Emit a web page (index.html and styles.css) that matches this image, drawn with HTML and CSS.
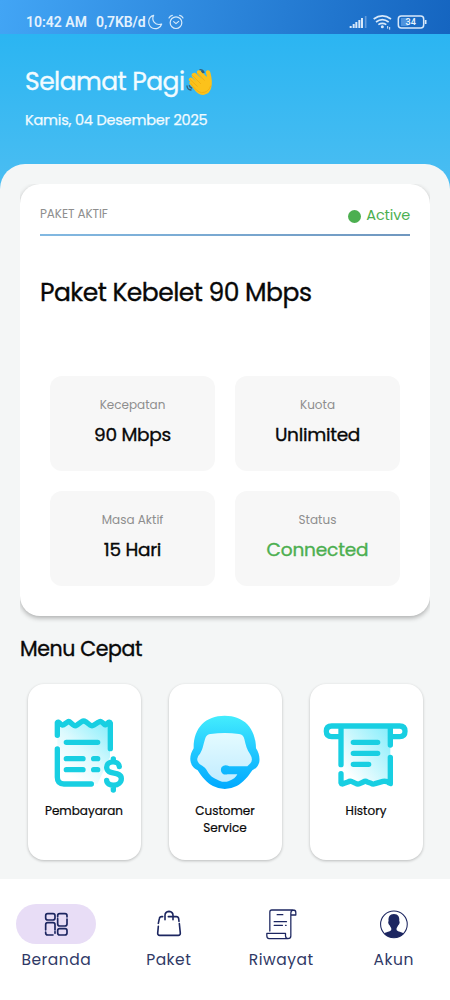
FILE: index.html
```html
<!DOCTYPE html>
<html lang="id">
<head>
<meta charset="utf-8">
<title>Beranda</title>
<link rel="stylesheet" href="styles.css">
</head>
<body>
<div class="app">
  <div class="statusbar">
    <span class="sb-time">10:42 AM</span>
    <span class="sb-rate">0,7KB/d</span>
    <svg class="sb-left" viewBox="438 36 120 60" fill="none" stroke="#d6eafb" stroke-width="3.6" stroke-linecap="round" stroke-linejoin="round">
      <path d="M461 46C443 50 441 76 457 84C468 89 482 84 485 72C466 78 453 62 461 46Z"/>
      <circle cx="528" cy="68" r="17.500"/><path d="M521 65L528 71L536 64M507 54Q510 47 517 46M539 46Q546 47 549 54"/>
    </svg>
    <svg class="sb-right" viewBox="369 36 240 60" fill="none" stroke="#d9e9fa">
      <path d="M377 78v6M386 72v12M394 66v18M403 60v24M411 54v30" stroke-width="6"/>
      <path d="M422 48v36" stroke-width="5" stroke="#639bdb"/>
      <path d="M446 57Q472 38 498 57M453 66Q472 52 491 66M460 74Q472 66 484 74" stroke-width="5"/>
      <circle cx="472" cy="80" r="4.500" fill="#d9e9fa" stroke="none"/><path d="M488 78v8M494 81v8" stroke-width="3"/>
      <rect x="520" y="48" width="76" height="36" rx="9" stroke-width="4.500"/>
      <rect x="528" y="54" width="22" height="24" fill="#4f93dd" stroke="none"/>
      <path d="M602 60v12" stroke-width="5"/>
      <text class="sb-batt" x="557" y="75.500" text-anchor="middle">34</text>
    </svg>
  </div>
  <header class="header">
    <h1 class="greeting"><span class="greeting-text">Selamat Pagi</span>
      <svg class="wave" viewBox="558 200 84 90">
        <path d="M567 235Q572 229 578 234L589 244L576 229Q572 221 580 218Q585 216 590 221L606 237L592 220Q588 212 595 210Q600 208 605 213L620 230Q621 225 618 219Q616 211 623 210Q630 209 632 220Q638 243 634 261Q630 281 610 284Q596 284 587 273L569 251Q566 244 574 243L580 246L569 243Q564 239 567 235Z" fill="#fcc21b"/>
        <path d="M571 238L592 258M577 225L602 250M594 219L613 240M573 250Q591 276 605 277Q625 277 632 257" fill="none" stroke="#f2ac10" stroke-width="2.500" stroke-linecap="round"/>
        <path d="M600 208Q609 208 612 216M605 213l4 4M561 257Q562 268 573 269M568 256Q569 261 575 263" fill="none" stroke="#355f79" stroke-width="4" stroke-linecap="round"/>
      </svg>
    </h1>
    <p class="date">Kamis, 04 Desember 2025</p>
  </header>
  <main class="sheet">
    <section class="plan">
      <div class="plan-head"><span class="plan-label">PAKET AKTIF</span><span class="active"><i class="dot"></i><span class="active-text">Active</span></span></div>
      <h2 class="plan-name">Paket Kebelet 90 Mbps</h2>
      <div class="stats">
        <div class="stat"><span class="stat-label">Kecepatan</span><strong class="stat-value">90 Mbps</strong></div>
        <div class="stat"><span class="stat-label">Kuota</span><strong class="stat-value">Unlimited</strong></div>
        <div class="stat"><span class="stat-label">Masa Aktif</span><strong class="stat-value">15 Hari</strong></div>
        <div class="stat"><span class="stat-label">Status</span><strong class="stat-value connected">Connected</strong></div>
      </div>
    </section>
    <h3 class="menu-title">Menu Cepat</h3>
    <div class="menu">
      <a class="tile">
        <svg class="tile-icon" viewBox="57 129 270 246" fill="none" stroke="#18cfe2" stroke-width="16" stroke-linecap="round" stroke-linejoin="round">
          <defs><linearGradient id="paper" x1="1" y1="0" x2="0.100" y2="0.800"><stop stop-color="#83edfb"/><stop offset="1" stop-color="#fff"/></linearGradient>
          <linearGradient id="bill" x1="1" y1="0" x2="0.300" y2="0.900"><stop stop-color="#83edfb"/><stop offset=".6" stop-color="#dcfafe"/><stop offset="1" stop-color="#fff"/></linearGradient></defs>
          <path d="M112 157L125 168L138 157L164 168L190 153L218 168L245 153L270 157V262L232 342H130L112 322Z" fill="url(#bill)" stroke="none"/>
          <path d="M112 196V158Q114 154 120 160Q127 169 134 162L143 156Q147 153 152 158L160 165Q165 169 171 165L185 155Q191 151 197 155L210 165Q216 169 222 165L235 157Q241 152 246 157L253 163Q257 167 262 160Q269 153 271 159V236"/>
          <path d="M112 237V322Q112 342 132 342H214M139 217H233M139 266H189M221 266H233M139 299H189M221 299H233"/>
          <path d="M298 290C296 270 260 271 260 292C260 318 304 301 304 326C304 350 260 352 260 331M280 267V275M280 350V360"/>
        </svg>
        <span class="tile-label">Pembayaran</span>
      </a>
      <a class="tile">
        <svg class="tile-icon" viewBox="59 129 270 246">
          <defs><linearGradient id="agent" x1="0" y1="0" x2="0" y2="1"><stop stop-color="#44edfd"/><stop offset=".45" stop-color="#24caff"/><stop offset="1" stop-color="#00a9ff"/></linearGradient>
          <linearGradient id="face" x1="0" y1="0" x2="0" y2="1"><stop stop-color="#e4fbff"/><stop offset="1" stop-color="#c2ecff"/></linearGradient></defs>
          <path d="M193 137C135 137 99 174 100 235C91 249 88 264 91 275Q94 292 112 301C125 321 140 340 158 348Q193 366 229 348C248 339 263 320 276 301Q294 292 297 275C299 260 295 247 287 235C286 173 250 137 193 137Z" fill="url(#agent)"/>
          <path d="M151 192Q193 186 236 192C245 193 250 198 252 207C256 225 260 240 269 252Q281 271 268 282L261 289H207Q193 281 184 291Q178 303 187 311Q192 315 202 313H231Q226 326 204 334Q191 338 177 332C156 323 148 317 141 304C132 286 119 287 113 276Q106 263 119 251C128 238 130 218 136 202Q140 193 151 192Z" fill="url(#face)"/>
        </svg>
        <span class="tile-label">Customer<br>Service</span>
      </a>
      <a class="tile">
        <svg class="tile-icon" viewBox="63 129 270 246" fill="none" stroke="#18cfe2" stroke-width="16" stroke-linecap="round" stroke-linejoin="round">
          <path d="M124 172H271V338L242 333L220 342L197 333L170 342L149 333L124 340Z" fill="url(#paper)" stroke="none"/>
          <path d="M118 200H95Q79 200 79 184Q79 168 95 168H299Q315 168 315 184Q315 200 299 200H277M123 172V284M271 172V225M271 262V341Q267 341 262 335Q255 333 249 334L225 341Q219 344 213 340L202 336Q196 332 190 336L179 341Q173 344 167 340L156 335Q150 332 144 336L133 340Q125 345 123 338V311M160 217H233M160 250H233M160 283H206"/>
        </svg>
        <span class="tile-label">History</span>
      </a>
    </div>
  </main>
  <nav class="nav">
    <a class="nav-item"><span class="pill on">
      <svg class="nav-icon" viewBox="120 102 96 120" stroke-width="5">
        <rect x="137" y="131" width="28" height="19" rx="6"/><rect x="173" y="176" width="28" height="19" rx="6"/>
        <path d="M137 180V164Q137 158 143 158H159Q165 158 165 164V180M137 186V189Q137 195 143 195H159M165 185V190M201 147V162Q201 168 195 168H179Q173 168 173 162V146M173 140V137Q173 131 179 131H195Q201 131 201 137V141"/>
      </svg></span><span class="nav-label">Beranda</span></a>
    <a class="nav-item"><span class="pill">
      <svg class="nav-icon" viewBox="459 102 96 120" stroke-width="4.800">
        <path d="M475 160L478 146Q479 140 485 140H488M495 149V136Q495 125 507 124Q519 125 519 136V149M505 140H529Q535 140 536 146L537 154M538 161L541 190Q541 196 535 196H479Q473 196 473 190L475 169"/>
      </svg></span><span class="nav-label">Paket</span></a>
    <a class="nav-item"><span class="pill">
      <svg class="nav-icon" viewBox="119.500 102 96 120" stroke-width="3.800">
        <path d="M134 183V126Q134 120 140 120H204Q212 120 212 128V135H198M204 120Q197 121 197 130V198Q197 206 188 206H132Q125 205 125 197V190H181V198Q182 206 189 206M156 134H173M147 155H184M147 166H172M181 166H183"/>
      </svg></span><span class="nav-label">Riwayat</span></a>
    <a class="nav-item"><span class="pill">
      <svg class="nav-icon" viewBox="458.250 102 96 120" stroke-width="3.200">
        <circle cx="506" cy="163" r="40"/>
        <path d="M506 132C493 132 489 141 490 153C487 156 490 164 493 166L498 175V180C496 185 481 186 477 191Q488 203 506 203Q524 203 535 191C531 186 516 185 514 180V175L519 166C522 164 525 156 522 153C523 141 519 132 506 132Z" fill="#1c2660" stroke="none"/>
      </svg></span><span class="nav-label">Akun</span></a>
  </nav>
</div>
</body>
</html>
```
FILE: styles.css
```css
* { box-sizing: border-box; }
body { margin: 0; font-family: Poppins, Inter, "Liberation Sans", sans-serif; color: #080808; background: #fff; }
h1, h2, h3, p { margin: 0; font-weight: 400; }
.app { width: 450px; height: 1000px; display: flex; flex-direction: column; background: linear-gradient(#2bb5f2 34px, #49bdf2 180px); }
.statusbar { height: 34px; flex: none; display: flex; align-items: center; padding: 10px 22px 0 26px; background: linear-gradient(100deg, #42a5f5, #1565c0); color: #e4f2fe; font: 600 14px/24px Roboto, sans-serif; white-space: nowrap; }
.sb-time { width: 70px; }
.sb-rate { width: 50px; letter-spacing: -.1px; }
.sb-left { width: 40px; height: 20px; }
.sb-right { width: 80px; height: 20px; margin-left: auto; margin-right: 0; }
.sb-batt { font: 600 27px Roboto, sans-serif; fill: #e8f3fe; stroke: none; }
.header { height: 130px; flex: none; padding: 31px 25px 0; color: #f2fbff; }
.greeting { display: flex; align-items: center; height: 34px; font-size: 25px; line-height: 34px; -webkit-text-stroke: .35px; }
.greeting-text { width: 161px; white-space: nowrap; letter-spacing: -.55px; }
.wave { width: 28px; height: 30px; }
.date { margin-top: 11px; font-size: 14.5px; line-height: 20px; letter-spacing: -.2px; -webkit-text-stroke: .25px; }
.sheet { height: 715px; flex: none; padding: 20px 20px 0; background: #f4f6f6; border-radius: 25px 25px 0 0; }
.plan { height: 432px; padding: 20px; border-radius: 20px; background: #fff; box-shadow: 0 2px 5px rgba(0,0,0,.3); clip-path: inset(0 0 -10px 0); }
.plan-head { height: 32px; display: flex; justify-content: space-between; border-bottom: 2px solid; border-image: linear-gradient(90deg, #82b9e2, #7097bf) 1; }
.plan-label { font-size: 12px; line-height: 19px; letter-spacing: -.1px; color: #8e8e8e; }
.active { display: flex; align-items: center; height: 22px; gap: 5px; color: #4caf50; font-size: 14.5px; letter-spacing: -.15px; }
.dot { width: 13px; height: 13px; border-radius: 50%; background: #4caf50; margin-top: 2px; }
.plan-name { margin-top: 41px; font-size: 25px; line-height: 32px; letter-spacing: -.52px; white-space: nowrap; -webkit-text-stroke: .35px; }
.stats { margin: 67px 10px 0; display: grid; grid-template-columns: 165px 165px; grid-auto-rows: 95px; gap: 20px; }
.stat { padding-top: 19px; display: flex; flex-direction: column; align-items: center; border-radius: 12px; background: #f7f7f7; }
.stat-label { font-size: 12px; line-height: 20px; color: #8e8e8e; }
.stat-value { margin-top: 6px; font-size: 18.5px; line-height: 28px; font-weight: 400; letter-spacing: -.28px; -webkit-text-stroke: .35px; }
.connected { color: #4caf50; letter-spacing: -.15px; }
.menu-title { margin-top: 19px; font-size: 20.5px; line-height: 28px; letter-spacing: -.37px; -webkit-text-stroke: .35px; }
.menu { margin: 21px 7.500px 0; display: grid; grid-template-columns: repeat(3, 113px); justify-content: space-between; }
.tile { height: 176px; padding-top: 29px; display: flex; flex-direction: column; align-items: center; border-radius: 16px; background: #fff; box-shadow: 0 1px 3px rgba(0,0,0,.24); }
.tile-icon { width: 90px; height: 82px; }
.tile-label { margin-top: 7px; font-size: 12px; line-height: 17px; font-weight: 400; letter-spacing: 0; text-align: center; -webkit-text-stroke: .2px; }
.nav { flex: 1; display: grid; grid-template-columns: repeat(4, 1fr); padding-top: 25px; background: #fff; }
.nav-item { display: flex; flex-direction: column; align-items: center; }
.pill { width: 80px; height: 40px; display: flex; justify-content: center; border-radius: 20px; }
.on { background: #e8ddf6; }
.nav-icon { width: 32px; height: 40px; fill: none; stroke: #1c2660; stroke-linecap: round; stroke-linejoin: round; }
.nav-label { margin-top: 5px; font-size: 15.5px; line-height: 21px; letter-spacing: .5px; color: #303966; }
```
